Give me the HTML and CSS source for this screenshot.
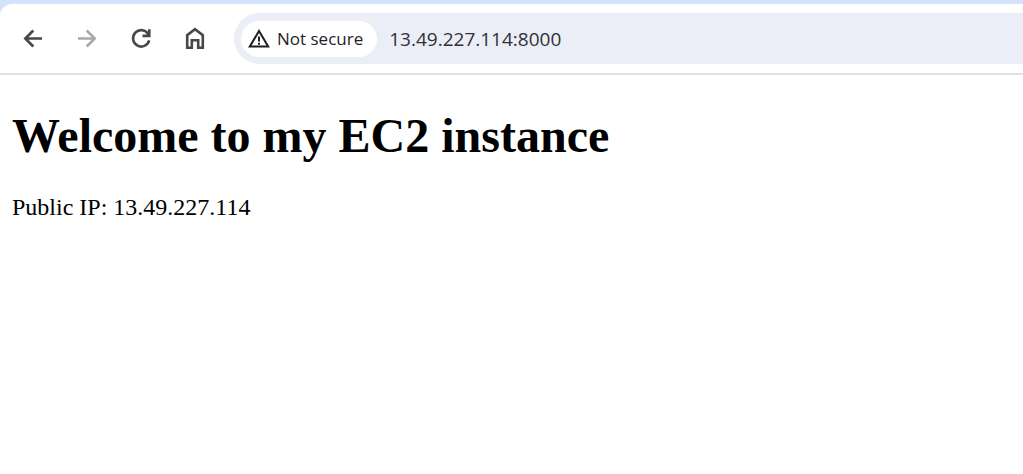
FILE: index.html
```html
<!DOCTYPE html>
<html lang="en">
<head>
<meta charset="utf-8">
<meta name="viewport" content="width=device-width, initial-scale=1">
<title>EC2 instance</title>
<link rel="stylesheet" href="styles.css">
</head>
<body>
<header class="browser">
  <nav class="toolbar" aria-label="Browser">
    <div class="nav-buttons">
      <button class="icon-button" type="button" aria-label="Back">
        <svg viewBox="0 0 24 24"><path d="M21 11.500H4.500M12.300 3.500L4.300 11.500L12.300 19.500"/></svg>
      </button>
      <button class="icon-button" type="button" aria-label="Forward" disabled>
        <svg viewBox="0 0 24 24"><path d="M3 11.500H19.500M11.700 3.500L19.700 11.500L11.700 19.500"/></svg>
      </button>
      <button class="icon-button" type="button" aria-label="Reload">
        <svg viewBox="0 0 24 24"><path d="M20.200 13.400A8.200 8.200 0 1 1 19.400 7.300M20.300 2.200V8.900H13.500"/></svg>
      </button>
      <button class="icon-button" type="button" aria-label="Home">
        <svg viewBox="0 0 24 24"><path d="M4.200 20.700V8.100L12 2.100L19.800 8.100V20.700H15.200V13.200H8.800V20.700Z"/></svg>
      </button>
    </div>
    <div class="address-bar">
      <button class="security-chip" type="button">
        <svg class="warning-icon" viewBox="0 0 22 20"><path class="warning-outline" d="M11 2L20.200 17.500H1.800Z"/><path class="warning-mark" d="M11 7.500V12.500M11 13.700V15.700"/></svg>
        <span>Not secure</span>
      </button>
      <input class="address" type="text" aria-label="Address" value="13.49.227.114:8000" spellcheck="false">
    </div>
  </nav>
</header>
<main class="page">
  <h1>Welcome to my EC2 instance</h1>
  <p>Public IP: 13.49.227.114</p>
</main>
</body>
</html>
```

FILE: styles.css
```css
* {
  box-sizing: border-box;
}

body {
  margin: 0;
  background: #fff;
  color: #000;
}

.browser {
  padding-top: 4px;
  background: #d3e3fd;
}

.toolbar {
  display: flex;
  align-items: center;
  padding: 9px 0;
  border-bottom: 2px solid #e1e1e1;
  border-top-left-radius: 12px;
  background: #fff;
  font-family: "Open Sans", "Noto Sans", sans-serif;
}

.nav-buttons {
  display: flex;
  gap: 12px;
  padding: 0 18px 0 12px;
}

.icon-button {
  display: grid;
  place-items: center;
  width: 42px;
  height: 42px;
  padding: 0;
  border: 0;
  border-radius: 50%;
  background: none;
  color: #474747;
}

.icon-button:disabled {
  color: #a9a9a9;
}

.icon-button svg {
  width: 24px;
  height: 24px;
  fill: none;
  stroke: currentColor;
  stroke-width: 2.6;
}

.address-bar {
  display: flex;
  flex: 1;
  align-items: center;
  gap: 12px;
  min-width: 0;
  height: 51px;
  padding-left: 7px;
  border-radius: 26px 0 0 26px;
  background: #ebeef7;
}

.security-chip {
  display: flex;
  flex: none;
  align-items: center;
  gap: 7px;
  height: 36px;
  padding: 0 14px 0 7px;
  border: 0;
  border-radius: 18px;
  background: #fff;
  color: #1f1f1f;
  font: 500 17px/24px "Open Sans", "Noto Sans", sans-serif;
}

.warning-icon {
  width: 22px;
  height: 20px;
  fill: none;
  stroke: currentColor;
  stroke-width: 2;
}

.address {
  flex: 1;
  min-width: 0;
  padding: 0;
  border: 0;
  outline: 0;
  background: none;
  color: #303135;
  font: 400 19px/28px "Open Sans", "Noto Sans", sans-serif;
}

.page {
  padding: 33px 12px;
  font-family: "Liberation Serif", "Times New Roman", serif;
}

.page h1 {
  margin: 0 0 29px;
  font-size: 48px;
  line-height: 56px;
}

.page p {
  margin: 0;
  font-size: 24px;
  line-height: 28px;
}
```
